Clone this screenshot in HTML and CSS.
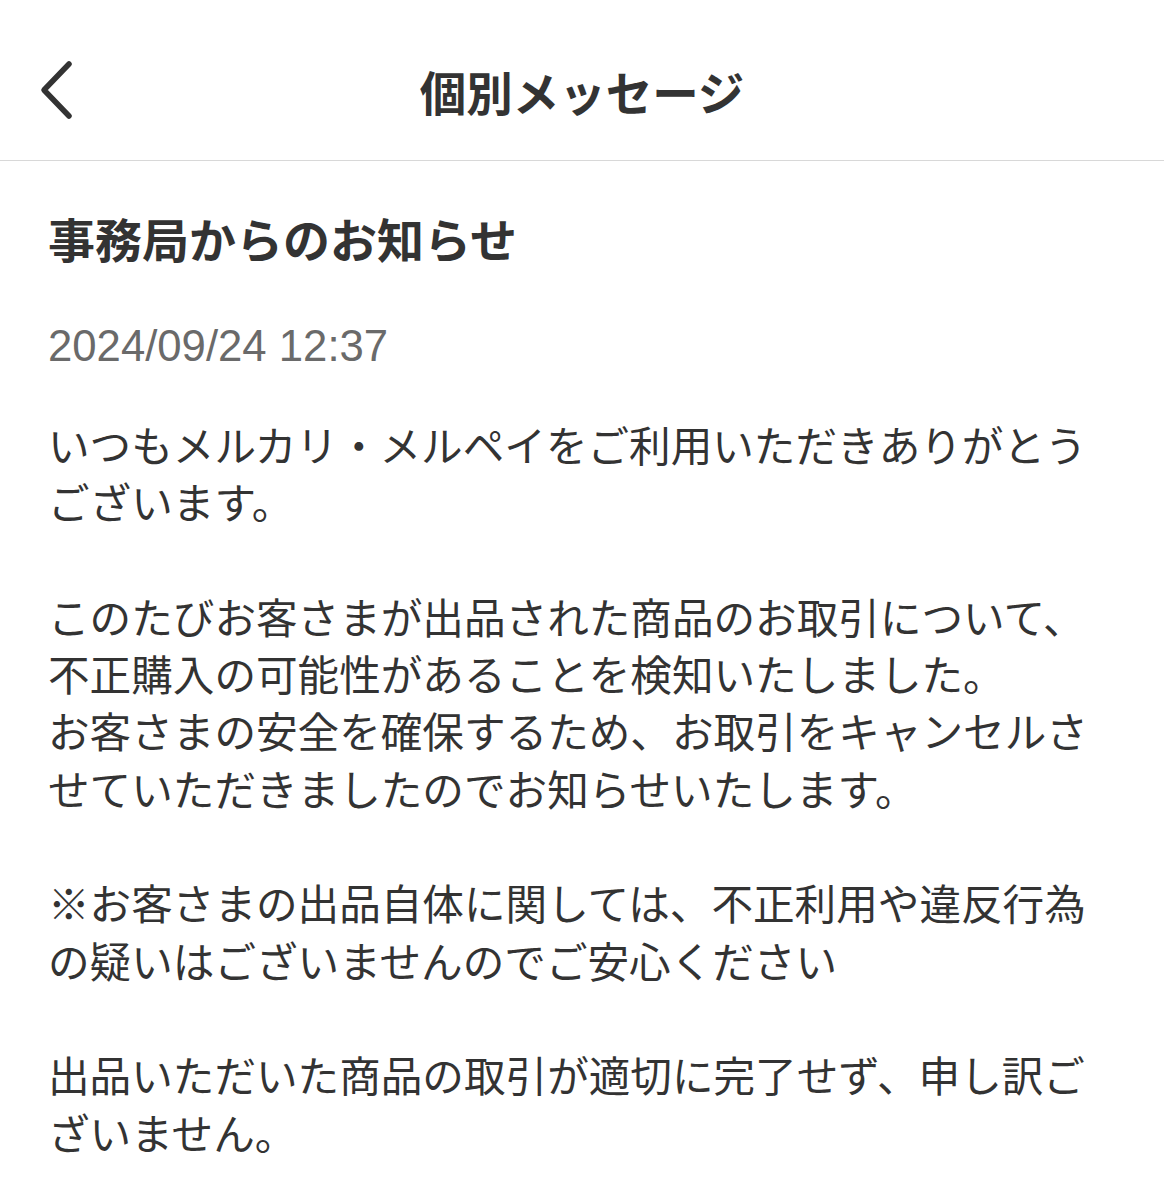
FILE: index.html
```html
<!DOCTYPE html>
<html lang="ja">
<head>
<meta charset="utf-8">
<title>個別メッセージ</title>
<link rel="stylesheet" href="styles.css">
</head>
<body>
<header class="nav">
  <button class="nav-back" aria-label="戻る">
    <svg viewBox="0 0 40 64" width="40" height="64" aria-hidden="true">
      <path d="M29 4 L4 30 L29 56" fill="none" stroke="#333" stroke-width="5.5" stroke-linecap="round" stroke-linejoin="round"/>
    </svg>
  </button>
  <h1 class="nav-title">個別メッセージ</h1>
  <span class="nav-spacer"></span>
</header>
<main class="message">
  <h2 class="message-title">事務局からのお知らせ</h2>
  <p class="message-date">2024/09/24 12:37</p>
  <div class="message-body">
    <p>いつもメルカリ・メルペイをご利用いただきありがとうございます。</p>
    <p>このたびお客さまが出品された商品のお取引について、不正購入の可能性があることを検知いたしました。<br>お客さまの安全を確保するため、お取引をキャンセルさせていただきましたのでお知らせいたします。</p>
    <p>※お客さまの出品自体に関しては、不正利用や違反行為の疑いはございませんのでご安心ください</p>
    <p>出品いただいた商品の取引が適切に完了せず、申し訳ございません。</p>
  </div>
</main>
</body>
</html>
```

FILE: styles.css
```css
html, body {
  margin: 0;
  padding: 0;
  background: #ffffff;
}

body {
  font-family: "Noto Sans CJK JP", "Noto Sans", sans-serif;
  color: #333333;
  width: 1164px;
}

.nav {
  box-sizing: border-box;
  height: 161px;
  display: grid;
  grid-template-columns: 1fr auto 1fr;
  align-items: start;
  border-bottom: 1px solid #d8d8d8;
}

.nav-back {
  justify-self: start;
  margin: 60px 0 0 40px;
  padding: 0;
  border: 0;
  background: none;
  width: 40px;
  height: 64px;
  display: flex;
}

.nav-title {
  margin: 67px 0 0;
  font-size: 46.5px;
  line-height: 47px;
  font-weight: 700;
  color: #333333;
  white-space: nowrap;
}

.message {
  padding: 0 48px;
}

.message-title {
  margin: 53px 0 0;
  font-size: 47px;
  line-height: 47px;
  font-weight: 700;
  color: #333333;
}

.message-date {
  margin: 63px 0 0;
  font-family: "Liberation Sans", Arial, sans-serif;
  font-size: 43.7px;
  line-height: 43px;
  color: #6a6a6a;
}

.message-body {
  margin-top: 49px;
  font-size: 41.6px;
  line-height: 57.3px;
  color: #333333;
}

.message-body p {
  margin: 0 0 57.3px;
}
```
